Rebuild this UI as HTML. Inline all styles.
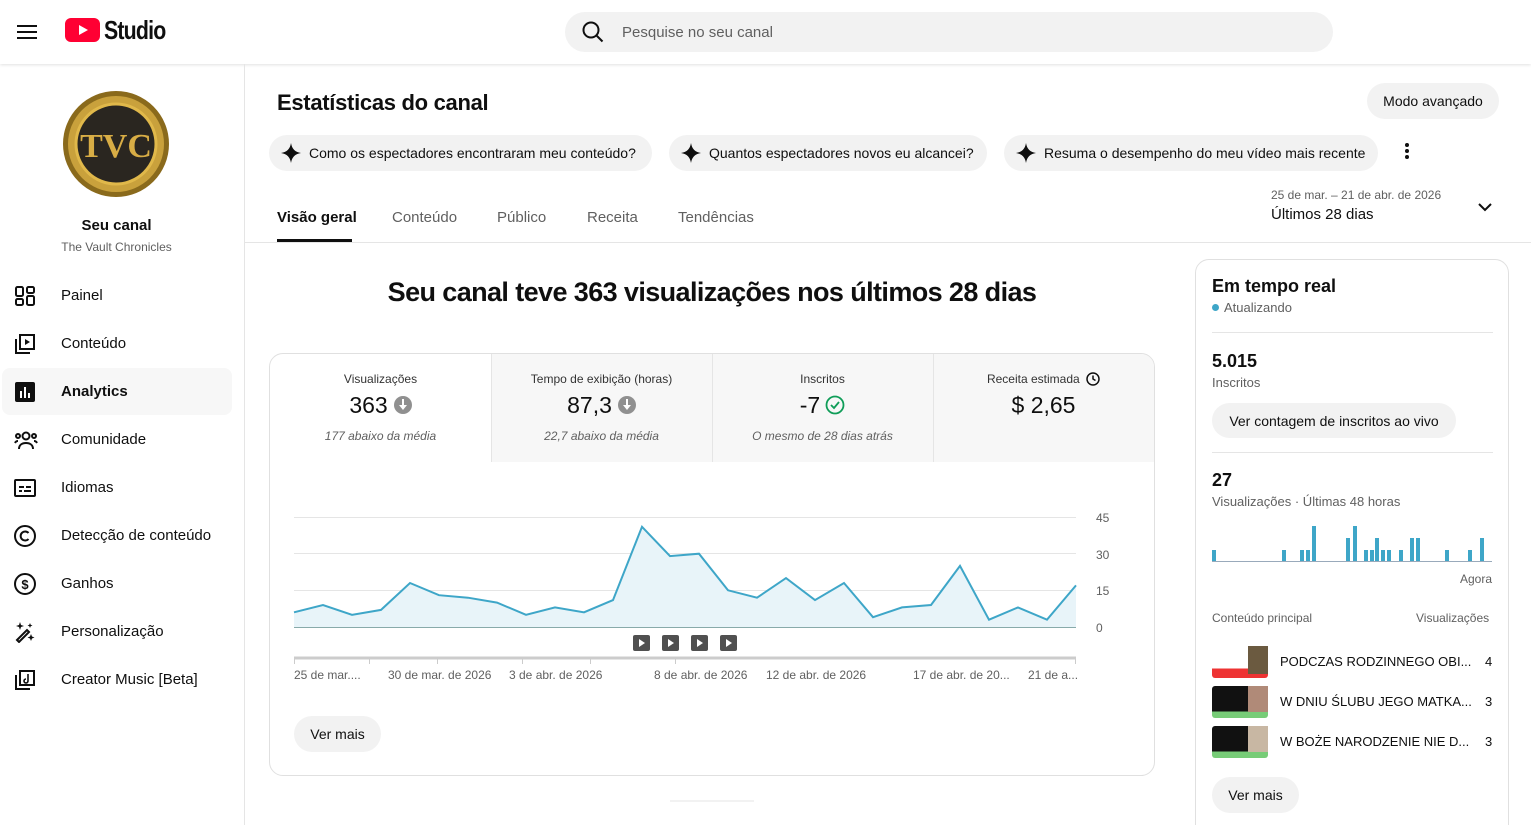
<!DOCTYPE html>
<html><head><meta charset="utf-8"><style>
*{margin:0;padding:0;box-sizing:border-box}
html,body{width:1531px;height:825px;overflow:hidden}
body{background:#fff;font-family:"Liberation Sans",Arial,sans-serif;color:#0f0f0f;position:relative}
.a{position:absolute;white-space:nowrap}
.nav{position:absolute;left:61px;font-size:15px}
.ic{position:absolute;left:14px}
.chip{position:absolute;top:135px;height:36px;background:#f2f2f2;border-radius:18px;font-size:14px;display:flex;align-items:center;padding-left:12px}
.chip svg{margin-right:8px}
.tab{position:absolute;top:209px;font-size:15px;color:#606060}
.m{position:absolute;top:354px;width:221px;height:108px;text-align:center}
.m .t{font-size:12px;color:#333;margin-top:18px}
.m .v{font-size:23px;margin-top:6px}
.m .s{font-size:12px;color:#606060;font-style:italic;margin-top:10px}
.dn{display:inline-block;width:18px;height:18px;border-radius:50%;background:#909090;vertical-align:-1px;margin-left:6px;position:relative}
.dn:before{content:"";position:absolute;left:8px;top:3px;width:2px;height:7px;background:#fff}
.dn:after{content:"";position:absolute;left:5px;top:9px;border-left:4px solid transparent;border-right:4px solid transparent;border-top:5px solid #fff}
.btn{position:absolute;background:#f2f2f2;border-radius:18px;font-size:14px;display:flex;align-items:center;justify-content:center;font-weight:500}
.xl{position:absolute;top:668px;font-size:12px;color:#606060}
</style></head><body>
<div class="a" style="left:0;top:0;width:1531px;height:64px;box-shadow:0 1px 3px rgba(0,0,0,.12)"></div>
<svg class="a" style="left:17px;top:24px" width="20" height="16"><rect y="1" width="20" height="2" fill="#0f0f0f"/><rect y="7" width="20" height="2" fill="#0f0f0f"/><rect y="13" width="20" height="2" fill="#0f0f0f"/></svg>
<svg class="a" style="left:65px;top:18px" width="35" height="24"><rect width="35" height="24" rx="6" fill="#ff0033"/><path d="M14 7l9 5-9 5z" fill="#fff"/></svg>
<div class="a" style="left:104px;top:15px;font-size:26px;font-weight:bold;letter-spacing:-1px;transform:scaleX(.82);transform-origin:left">Studio</div>
<div class="a" style="left:565px;top:12px;width:768px;height:40px;background:#f2f2f2;border-radius:20px"></div>
<svg class="a" style="left:582px;top:21px" width="22" height="22"><circle cx="9" cy="9" r="7.5" stroke="#0f0f0f" stroke-width="2" fill="none"/><path d="M14.5 14.5l6 6" stroke="#0f0f0f" stroke-width="2"/></svg>
<div class="a" style="left:622px;top:24px;font-size:15px;color:#606060">Pesquise no seu canal</div>
<div class="a" style="left:244px;top:64px;width:1px;height:761px;background:#e5e5e5"></div>
<svg class="a" style="left:62px;top:90px" width="108" height="108"><circle cx="54" cy="54" r="53" fill="#8a6a1c"/><circle cx="54" cy="54" r="48" fill="#c9a13c"/><circle cx="54" cy="54" r="40" fill="#2a2620" stroke="#e0b84a" stroke-width="3"/><text x="54" y="67" text-anchor="middle" font-size="34" font-weight="bold" fill="#d8ad45" font-family="Liberation Serif">TVC</text></svg>
<div class="a" style="left:0;width:233px;top:217px;text-align:center;font-size:15px;font-weight:bold">Seu canal</div>
<div class="a" style="left:0;width:233px;top:240px;text-align:center;font-size:12px;color:#606060">The Vault Chronicles</div>
<div class="a" style="left:2px;top:368px;width:230px;height:47px;background:#f7f7f7;border-radius:8px"></div>
<svg class="ic" style="top:285px" width="22" height="22" fill="none" stroke="#0f0f0f" stroke-width="2"><rect x="2" y="2" width="7" height="9" rx="1.5"/><rect x="13" y="2" width="7" height="6" rx="1.5"/><rect x="2" y="14" width="7" height="6" rx="1.5"/><rect x="13" y="11" width="7" height="9" rx="1.5"/></svg>
<div class="nav" style="top:287px">Painel</div>
<svg class="ic" style="top:333px" width="22" height="22" fill="none" stroke="#0f0f0f" stroke-width="2"><rect x="6" y="2" width="14" height="14"/><path d="M2 6v14h14"/><path d="M11 6l5 3-5 3z" fill="#0f0f0f" stroke="none"/></svg>
<div class="nav" style="top:335px">Conteúdo</div>
<svg class="ic" style="top:381px" width="22" height="22"><rect x="1" y="1" width="20" height="20" rx="2" fill="#0f0f0f"/><rect x="6" y="10" width="2" height="7" fill="#fff"/><rect x="10" y="6" width="2" height="11" fill="#fff"/><rect x="14" y="12" width="2" height="5" fill="#fff"/></svg>
<div class="nav" style="top:383px;font-weight:bold">Analytics</div>
<svg class="ic" style="top:429px" width="24" height="22" fill="none" stroke="#0f0f0f" stroke-width="2"><circle cx="12" cy="7" r="3.5"/><path d="M5 20c0-4 3-6 7-6s7 2 7 6"/><circle cx="4" cy="7" r="2"/><circle cx="20" cy="7" r="2"/><path d="M1 14c1-2 2-2 3-2M23 14c-1-2-2-2-3-2"/></svg>
<div class="nav" style="top:431px">Comunidade</div>
<svg class="ic" style="top:477px" width="22" height="22" fill="none" stroke="#0f0f0f" stroke-width="2"><rect x="1" y="3" width="20" height="16" rx="1"/><path d="M5 10h5M12 10h5M5 14h3M10 14h7"/></svg>
<div class="nav" style="top:479px">Idiomas</div>
<svg class="ic" style="top:525px" width="22" height="22" fill="none" stroke="#0f0f0f" stroke-width="2"><circle cx="11" cy="11" r="10"/><path d="M14.5 8a4.5 4.5 0 1 0 0 6"/></svg>
<div class="nav" style="top:527px">Detecção de conteúdo</div>
<svg class="ic" style="top:573px" width="22" height="22" fill="none" stroke="#0f0f0f" stroke-width="2"><circle cx="11" cy="11" r="10"/><text x="11" y="16" text-anchor="middle" font-size="13" font-weight="bold" fill="#0f0f0f" stroke="none">$</text></svg>
<div class="nav" style="top:575px">Ganhos</div>
<svg class="ic" style="top:621px" width="22" height="22" fill="#0f0f0f"><path d="M3 19l10-10 2 2-10 10z" fill="none" stroke="#0f0f0f" stroke-width="2"/><path d="M6 1l1 3 3 1-3 1-1 3-1-3-3-1 3-1z"/><path d="M17 13l1 2.5 2.5 1-2.5 1-1 2.5-1-2.5-2.5-1 2.5-1z"/><path d="M16 2l.7 1.8 1.8.7-1.8.7L16 7l-.7-1.8-1.8-.7 1.8-.7z"/></svg>
<div class="nav" style="top:623px">Personalização</div>
<svg class="ic" style="top:669px" width="22" height="22" fill="none" stroke="#0f0f0f" stroke-width="2"><rect x="6" y="2" width="14" height="14"/><path d="M2 6v14h14"/><path d="M14 5v7M14 12a2 2 0 1 1-2-2" stroke-width="1.6"/></svg>
<div class="nav" style="top:671px">Creator Music [Beta]</div>
<div class="a" style="left:277px;top:90px;font-size:22px;font-weight:bold;letter-spacing:-.3px">Estatísticas do canal</div>
<div class="btn" style="left:1367px;top:83px;width:132px;height:36px">Modo avançado</div>
<div class="chip" style="left:269px;width:383px"><svg width="20" height="20"><path d="M10 0c1 6 4 9 10 10-6 1-9 4-10 10-1-6-4-9-10-10 6-1 9-4 10-10z" fill="#0f0f0f"/></svg>Como os espectadores encontraram meu conteúdo?</div>
<div class="chip" style="left:669px;width:318px"><svg width="20" height="20"><path d="M10 0c1 6 4 9 10 10-6 1-9 4-10 10-1-6-4-9-10-10 6-1 9-4 10-10z" fill="#0f0f0f"/></svg>Quantos espectadores novos eu alcancei?</div>
<div class="chip" style="left:1004px;width:374px"><svg width="20" height="20"><path d="M10 0c1 6 4 9 10 10-6 1-9 4-10 10-1-6-4-9-10-10 6-1 9-4 10-10z" fill="#0f0f0f"/></svg>Resuma o desempenho do meu vídeo mais recente</div>
<svg class="a" style="left:1403px;top:142px" width="8" height="20" fill="#0f0f0f"><circle cx="4" cy="3" r="2"/><circle cx="4" cy="9" r="2"/><circle cx="4" cy="15" r="2"/></svg>
<div class="tab" style="left:277px;color:#0f0f0f;font-weight:bold">Visão geral</div>
<div class="a" style="left:277px;top:239px;width:75px;height:3px;background:#0f0f0f"></div>
<div class="tab" style="left:392px">Conteúdo</div>
<div class="tab" style="left:497px">Público</div>
<div class="tab" style="left:587px">Receita</div>
<div class="tab" style="left:678px">Tendências</div>
<div class="a" style="left:1271px;top:188px;font-size:12px;color:#606060">25 de mar. – 21 de abr. de 2026</div>
<div class="a" style="left:1271px;top:206px;font-size:15px">Últimos 28 dias</div>
<svg class="a" style="left:1477px;top:201px" width="16" height="12"><path d="M2 3l6 6 6-6" stroke="#0f0f0f" stroke-width="2" fill="none"/></svg>
<div class="a" style="left:245px;top:242px;width:1286px;height:1px;background:#e5e5e5"></div>
<div class="a" style="left:269px;width:886px;top:277px;text-align:center;font-size:27px;font-weight:bold;letter-spacing:-.6px">Seu canal teve 363 visualizações nos últimos 28 dias</div>
<div class="a" style="left:269px;top:353px;width:886px;height:423px;border:1px solid #e0e0e0;border-radius:14px;overflow:hidden">
 <div class="a" style="left:221px;top:0;width:665px;height:108px;background:#f7f7f7"></div>
 <div class="a" style="left:442px;top:0;width:1px;height:108px;background:#e5e5e5"></div>
 <div class="a" style="left:663px;top:0;width:1px;height:108px;background:#e5e5e5"></div>
 <div class="a" style="left:221px;top:0;width:1px;height:108px;background:#e5e5e5"></div>
</div>
<div class="m" style="left:270px"><div class="t">Visualizações</div><div class="v">363<span class="dn"></span></div><div class="s">177 abaixo da média</div></div>
<div class="m" style="left:491px"><div class="t">Tempo de exibição (horas)</div><div class="v">87,3<span class="dn"></span></div><div class="s">22,7 abaixo da média</div></div>
<div class="m" style="left:712px"><div class="t">Inscritos</div><div class="v">-7<svg width="20" height="20" style="vertical-align:-2px;margin-left:5px"><circle cx="10" cy="10" r="8.5" stroke="#0f9d58" stroke-width="1.8" fill="none"/><path d="M6 10l3 3 5-6" stroke="#0f9d58" stroke-width="1.8" fill="none"/></svg></div><div class="s">O mesmo de 28 dias atrás</div></div>
<div class="m" style="left:933px"><div class="t">Receita estimada <svg width="14" height="14" style="vertical-align:-3px;margin-left:3px"><circle cx="7" cy="7" r="6" stroke="#0f0f0f" stroke-width="1.5" fill="none"/><path d="M7 3.5V7l2.5 1.5" stroke="#0f0f0f" stroke-width="1.5" fill="none"/></svg></div><div class="v">$ 2,65</div></div>
<svg class="a" style="left:0;top:0" width="1531" height="825">
 <g stroke="#e5e5e5" stroke-width="1"><line x1="294" y1="517.5" x2="1076" y2="517.5"/><line x1="294" y1="553.5" x2="1076" y2="553.5"/><line x1="294" y1="590.5" x2="1076" y2="590.5"/></g>
 <path d="M294 612.3L323 605L352 614.8L381 609.9L410 583L439 595.2L468 597.7L497 602.6L526 614.8L555 607.4L584 612.3L613 600.1L642 526.8L670 556.1L699 553.7L728 590.3L757 597.7L786 578.1L815 600.1L844 583L873 617.2L902 607.4L931 605L960 565.9L989 619.7L1018 607.4L1047 619.7L1076 585.4L1076 627L294 627Z" fill="#e8f4f9"/>
 <path d="M294 612.3L323 605L352 614.8L381 609.9L410 583L439 595.2L468 597.7L497 602.6L526 614.8L555 607.4L584 612.3L613 600.1L642 526.8L670 556.1L699 553.7L728 590.3L757 597.7L786 578.1L815 600.1L844 583L873 617.2L902 607.4L931 605L960 565.9L989 619.7L1018 607.4L1047 619.7L1076 585.4" fill="none" stroke="#3ea6c8" stroke-width="2"/>
 <line x1="294" y1="627.5" x2="1076" y2="627.5" stroke="#8aa" stroke-width="1"/>
 <g fill="#606060" font-size="12" font-family="Liberation Sans"><text x="1096" y="522">45</text><text x="1096" y="559">30</text><text x="1096" y="595">15</text><text x="1096" y="632">0</text></g>
 <g fill="#505050"><rect x="633" y="635" width="17" height="16" rx="2"/><rect x="662" y="635" width="17" height="16" rx="2"/><rect x="691" y="635" width="17" height="16" rx="2"/><rect x="720" y="635" width="17" height="16" rx="2"/></g>
 <g fill="#fff"><path d="M639 639l6 4-6 4z"/><path d="M668 639l6 4-6 4z"/><path d="M697 639l6 4-6 4z"/><path d="M726 639l6 4-6 4z"/></g>
 <line x1="294" y1="658" x2="1076" y2="658" stroke="#ccc" stroke-width="3"/>
 <g stroke="#ccc"><line x1="294.5" y1="658" x2="294.5" y2="664"/><line x1="369.5" y1="658" x2="369.5" y2="664"/><line x1="437.5" y1="658" x2="437.5" y2="664"/><line x1="522.5" y1="658" x2="522.5" y2="664"/><line x1="590.5" y1="658" x2="590.5" y2="664"/><line x1="675.5" y1="658" x2="675.5" y2="664"/><line x1="1075.5" y1="658" x2="1075.5" y2="664"/></g>
 <line x1="670" y1="801" x2="754" y2="801" stroke="#e5e5e5"/>
</svg>
<div class="xl" style="left:294px">25 de mar....</div>
<div class="xl" style="left:388px">30 de mar. de 2026</div>
<div class="xl" style="left:509px">3 de abr. de 2026</div>
<div class="xl" style="left:654px">8 de abr. de 2026</div>
<div class="xl" style="left:766px">12 de abr. de 2026</div>
<div class="xl" style="left:913px">17 de abr. de 20...</div>
<div class="xl" style="left:1028px">21 de a...</div>
<div class="btn" style="left:294px;top:716px;width:87px;height:36px">Ver mais</div>
<div class="a" style="left:1195px;top:259px;width:314px;height:580px;border:1px solid #e0e0e0;border-radius:14px"></div>
<div class="a" style="left:1212px;top:276px;font-size:18px;font-weight:bold">Em tempo real</div>
<div class="a" style="left:1212px;top:304px;width:7px;height:7px;border-radius:50%;background:#3ea6c8"></div>
<div class="a" style="left:1224px;top:300px;font-size:13px;color:#606060">Atualizando</div>
<div class="a" style="left:1212px;top:332px;width:281px;height:1px;background:#e5e5e5"></div>
<div class="a" style="left:1212px;top:351px;font-size:18px;font-weight:bold">5.015</div>
<div class="a" style="left:1212px;top:375px;font-size:13px;color:#606060">Inscritos</div>
<div class="btn" style="left:1212px;top:403px;width:244px;height:35px">Ver contagem de inscritos ao vivo</div>
<div class="a" style="left:1212px;top:452px;width:281px;height:1px;background:#e5e5e5"></div>
<div class="a" style="left:1212px;top:470px;font-size:18px;font-weight:bold">27</div>
<div class="a" style="left:1212px;top:494px;font-size:13px;color:#606060">Visualizações · Últimas 48 horas</div>
<svg class="a" style="left:0;top:0" width="1531" height="825"><g fill="#3ea6c8">
<rect x="1212" y="550" width="4" height="11"/><rect x="1282" y="550" width="4" height="11"/><rect x="1300" y="550" width="4" height="11"/><rect x="1306" y="550" width="4" height="11"/><rect x="1312" y="526" width="4" height="35"/><rect x="1346" y="538" width="4" height="23"/><rect x="1353" y="526" width="4" height="35"/><rect x="1364" y="550" width="4" height="11"/><rect x="1375" y="538" width="4" height="23"/><rect x="1370" y="550" width="4" height="11"/><rect x="1381" y="550" width="4" height="11"/><rect x="1387" y="550" width="4" height="11"/><rect x="1399" y="550" width="4" height="11"/><rect x="1410" y="538" width="4" height="23"/><rect x="1416" y="538" width="4" height="23"/><rect x="1445" y="550" width="4" height="11"/><rect x="1468" y="550" width="4" height="11"/><rect x="1480" y="538" width="4" height="23"/></g>
<line x1="1212" y1="561.5" x2="1492" y2="561.5" stroke="#9ab" /></svg>
<div class="a" style="left:1460px;top:572px;font-size:12px;color:#606060">Agora</div>
<div class="a" style="left:1212px;top:611px;font-size:12px;color:#606060">Conteúdo principal</div>
<div class="a" style="left:1416px;top:611px;font-size:12px;color:#606060">Visualizações</div>
<div class="a" style="left:1212px;top:646px;width:56px;height:32px;background:linear-gradient(#fff 0 70%,#e33 70%);border-radius:3px"><div style="position:absolute;right:0;top:0;width:20px;height:28px;background:#6b5a40"></div></div>
<div class="a" style="left:1212px;top:686px;width:56px;height:32px;background:linear-gradient(#111 0 80%,#7c7 80%);border-radius:3px"><div style="position:absolute;right:0;top:0;width:20px;height:26px;background:#b08a78"></div></div>
<div class="a" style="left:1212px;top:726px;width:56px;height:32px;background:linear-gradient(#111 0 80%,#7c7 80%);border-radius:3px"><div style="position:absolute;right:0;top:0;width:20px;height:26px;background:#c8b7a3"></div></div>
<div class="a" style="left:1280px;top:654px;font-size:13px">PODCZAS RODZINNEGO OBI...</div><div class="a" style="left:1485px;top:654px;font-size:13px">4</div>
<div class="a" style="left:1280px;top:694px;font-size:13px">W DNIU ŚLUBU JEGO MATKA...</div><div class="a" style="left:1485px;top:694px;font-size:13px">3</div>
<div class="a" style="left:1280px;top:734px;font-size:13px">W BOŻE NARODZENIE NIE D...</div><div class="a" style="left:1485px;top:734px;font-size:13px">3</div>
<div class="btn" style="left:1212px;top:777px;width:87px;height:36px">Ver mais</div>
</body></html>
